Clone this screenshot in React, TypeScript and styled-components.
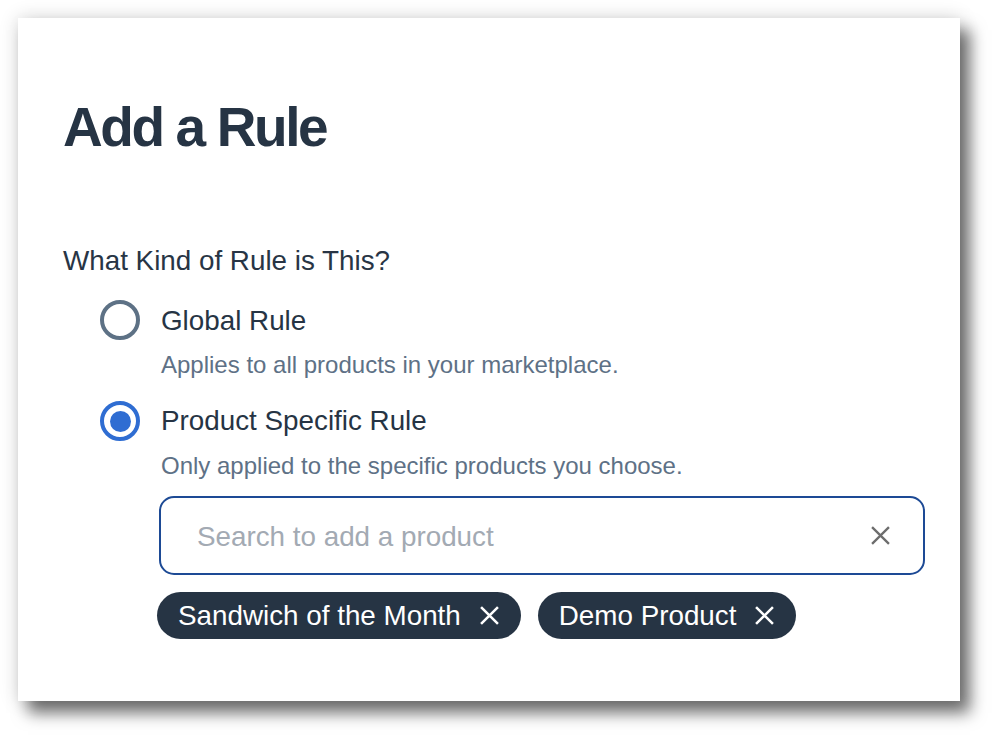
import React from "react";
import styled, { createGlobalStyle } from "styled-components";

const GlobalStyle = createGlobalStyle`
  html, body {
    margin: 0;
    padding: 0;
    background: #ffffff;
  }
  body {
    font-family: "Liberation Sans", Arial, Helvetica, sans-serif;
    -webkit-font-smoothing: antialiased;
  }
  * { box-sizing: border-box; }
`;

const Page = styled.div`
  padding: 18px 0 0 18px;
  width: 998px;
  height: 740px;
`;

const Card = styled.section`
  width: 942px;
  height: 683px;
  background: #ffffff;
  padding: 82px 35px 0 45px;
  box-shadow: 10px 12px 15px rgba(0, 0, 0, 0.55), 0 0 18px rgba(0, 0, 0, 0.16);
`;

const Title = styled.h1`
  margin: 0;
  font-size: 55px;
  line-height: 55px;
  font-weight: 700;
  letter-spacing: -2.4px;
  color: #263444;
`;

const Question = styled.p`
  margin: 89px 0 0 0;
  font-size: 27.8px;
  line-height: 1.2;
  color: #283545;
`;

const Options = styled.div`
  margin: 23px 0 0 37px;
  display: flex;
  flex-direction: column;
  gap: 21px;
`;

const Option = styled.div`
  display: grid;
  grid-template-columns: 40px 1fr;
  column-gap: 21px;
  align-items: center;
`;

const Radio = styled.span<{ $checked?: boolean }>`
  grid-column: 1;
  grid-row: 1;
  width: 40px;
  height: 40px;
  border-radius: 50%;
  border: 4px solid ${(p) => (p.$checked ? "#2f6dd2" : "#5d7185")};
  display: flex;
  align-items: center;
  justify-content: center;
  &::after {
    content: "";
    display: ${(p) => (p.$checked ? "block" : "none")};
    width: 21px;
    height: 21px;
    border-radius: 50%;
    background: #2f6dd2;
  }
`;

const Label = styled.span`
  grid-column: 2;
  grid-row: 1;
  font-size: 27.8px;
  line-height: 1.2;
  color: #263444;
`;

const Description = styled.span`
  grid-column: 2;
  grid-row: 2;
  margin-top: 11px;
  font-size: 24px;
  line-height: 1.2;
  color: #5e7186;
`;

const Extra = styled.div`
  grid-column: 2;
  grid-row: 3;
  margin: 15px 0 0 -2px;
  display: flex;
  flex-direction: column;
  gap: 17px;
`;

const SearchBox = styled.div`
  width: 766px;
  height: 79px;
  border: 2px solid #1d4a95;
  border-radius: 15px;
  display: flex;
  align-items: center;
  padding: 0 28px 0 36px;
`;

const SearchInput = styled.input`
  flex: 1;
  border: none;
  outline: none;
  background: transparent;
  font-family: "Liberation Sans", Arial, Helvetica, sans-serif;
  font-size: 27.8px;
  color: #263444;
  padding: 3px 0 0 0;
  &::placeholder {
    color: #a3aab3;
  }
`;

const ClearButton = styled.button`
  border: none;
  background: none;
  padding: 0;
  width: 30px;
  height: 30px;
  display: flex;
  align-items: center;
  justify-content: center;
  cursor: pointer;
`;

const Chips = styled.div`
  display: flex;
  gap: 17px;
  margin-left: -2px;
`;

const Chip = styled.span`
  height: 47px;
  border-radius: 24px;
  background: #263444;
  color: #ffffff;
  display: inline-flex;
  align-items: center;
  gap: 19px;
  padding: 1px 22px 0 21px;
  font-size: 27.8px;
  line-height: 1;
`;

const ChipRemove = styled.span`
  display: inline-flex;
  width: 19px;
  height: 19px;
`;

const Cross = ({ color, size, width }: { color: string; size: number; width: number }) => (
  <svg width={size} height={size} viewBox="0 0 18 18" fill="none">
    <path d="M1 1 L17 17 M17 1 L1 17" stroke={color} strokeWidth={width} strokeLinecap="butt" />
  </svg>
);

export default function App() {
  const chips = ["Sandwich of the Month", "Demo Product"];
  return (
    <Page>
      <GlobalStyle />
      <Card>
        <Title>Add a Rule</Title>
        <Question>What Kind of Rule is This?</Question>
        <Options>
          <Option>
            <Radio />
            <Label>Global Rule</Label>
            <Description>Applies to all products in your marketplace.</Description>
          </Option>
          <Option>
            <Radio $checked />
            <Label>Product Specific Rule</Label>
            <Description>Only applied to the specific products you choose.</Description>
            <Extra>
              <SearchBox>
                <SearchInput placeholder="Search to add a product" />
                <ClearButton aria-label="Clear">
                  <Cross color="#6d6d6d" size={19} width={2.2} />
                </ClearButton>
              </SearchBox>
              <Chips>
                {chips.map((c) => (
                  <Chip key={c}>
                    {c}
                    <ChipRemove>
                      <Cross color="#ffffff" size={19} width={2.4} />
                    </ChipRemove>
                  </Chip>
                ))}
              </Chips>
            </Extra>
          </Option>
        </Options>
      </Card>
    </Page>
  );
}
